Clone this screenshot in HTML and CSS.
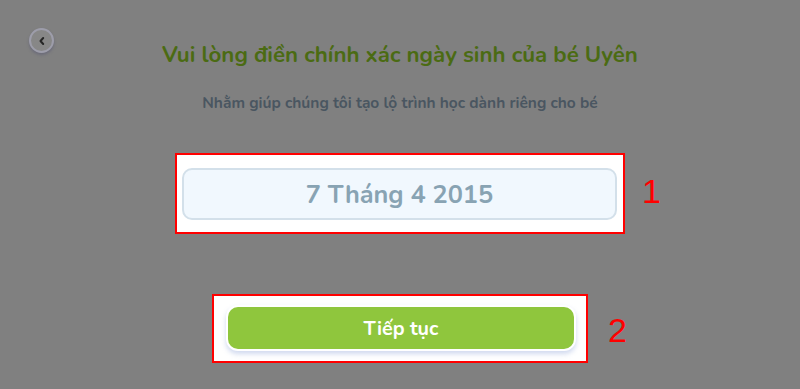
FILE: index.html
```html
<!DOCTYPE html>
<html lang="vi">
<head>
<meta charset="utf-8">
<link rel="stylesheet" href="styles.css">
</head>
<body>
<div class="page">
  <div class="header">
    <button class="back" aria-label="Quay lại">
      <svg width="10" height="10" viewBox="0 0 10 10"><path d="M6.2 2 L3.5 5 L6.2 8" fill="none" stroke="#262626" stroke-width="2" stroke-linecap="round" stroke-linejoin="round"/></svg>
    </button>
    <h1 class="title">Vui lòng điền chính xác ngày sinh của bé Uyên</h1>
    <div></div>
  </div>
  <p class="subtitle">Nhằm giúp chúng tôi tạo lộ trình học dành riêng cho bé</p>
  <div class="mark mark-date">
    <div class="date-field">7 Tháng 4 2015</div>
    <span class="mark-num num-1">1</span>
  </div>
  <div class="mark mark-btn">
    <div class="btn-wrap">
      <button class="btn">Tiếp tục</button>
    </div>
    <span class="mark-num num-2">2</span>
  </div>
</div>
</body>
</html>
```

FILE: styles.css
```css
* { box-sizing: border-box; }
html, body {
  margin: 0;
  padding: 0;
  background: #808080;
  height: 100%;
}
body {
  font-family: "Nunito", "Lato", "Open Sans", sans-serif;
  overflow: hidden;
}
.page {
  display: flex;
  flex-direction: column;
  align-items: center;
}
.header {
  width: 100%;
  display: grid;
  grid-template-columns: 1fr auto 1fr;
  padding: 28px 29px 0 29px;
}
.back {
  justify-self: start;
  width: 25px;
  height: 25px;
  border-radius: 50%;
  border: 2px solid #9d9daa;
  background: #878787;
  box-shadow: 0 2px 3px rgba(70, 70, 110, 0.35);
  display: flex;
  align-items: center;
  justify-content: center;
  padding: 0;
}
.title {
  margin: 13px 0 0 0;
  font-size: 22.3px;
  line-height: 28px;
  font-weight: 700;
  color: #4b6b13;
  text-align: center;
  white-space: nowrap;
}
.subtitle {
  margin: 24px 0 0 0;
  font-size: 15.5px;
  line-height: 20px;
  font-weight: 700;
  color: #4a5661;
}
.mark {
  position: relative;
  background: #ffffff;
  border: 2px solid #ff0000;
}
.mark-date {
  margin-top: 40px;
  width: 450px;
  padding: 13px 6px 12px 5px;
}
.date-field {
  height: 52px;
  border: 2px solid #d3e0ea;
  border-radius: 10px;
  background: #f1f8fe;
  display: flex;
  align-items: center;
  justify-content: center;
  font-size: 25.3px;
  font-weight: 700;
  color: #88a3b3;
}
.mark-btn {
  margin-top: 60px;
  width: 376px;
  padding: 9px 10px 10px 12px;
}
.btn-wrap {
  padding: 2px;
  border-radius: 12px;
  background: #ffffff;
  box-shadow: 0 3px 5px rgba(150, 170, 220, 0.45);
}
.btn {
  width: 100%;
  height: 42px;
  border: 0;
  border-radius: 10px;
  background: #8fc63d;
  color: #ffffff;
  font-family: inherit;
  font-size: 19.8px;
  font-weight: 700;
}
.mark-num {
  position: absolute;
  font-family: "Liberation Sans", Arial, sans-serif;
  color: #ff0000;
  font-size: 34px;
  line-height: 1;
}
.num-1 { left: 465px; top: 19px; }
.num-2 { left: 394px; top: 17px; }
```
